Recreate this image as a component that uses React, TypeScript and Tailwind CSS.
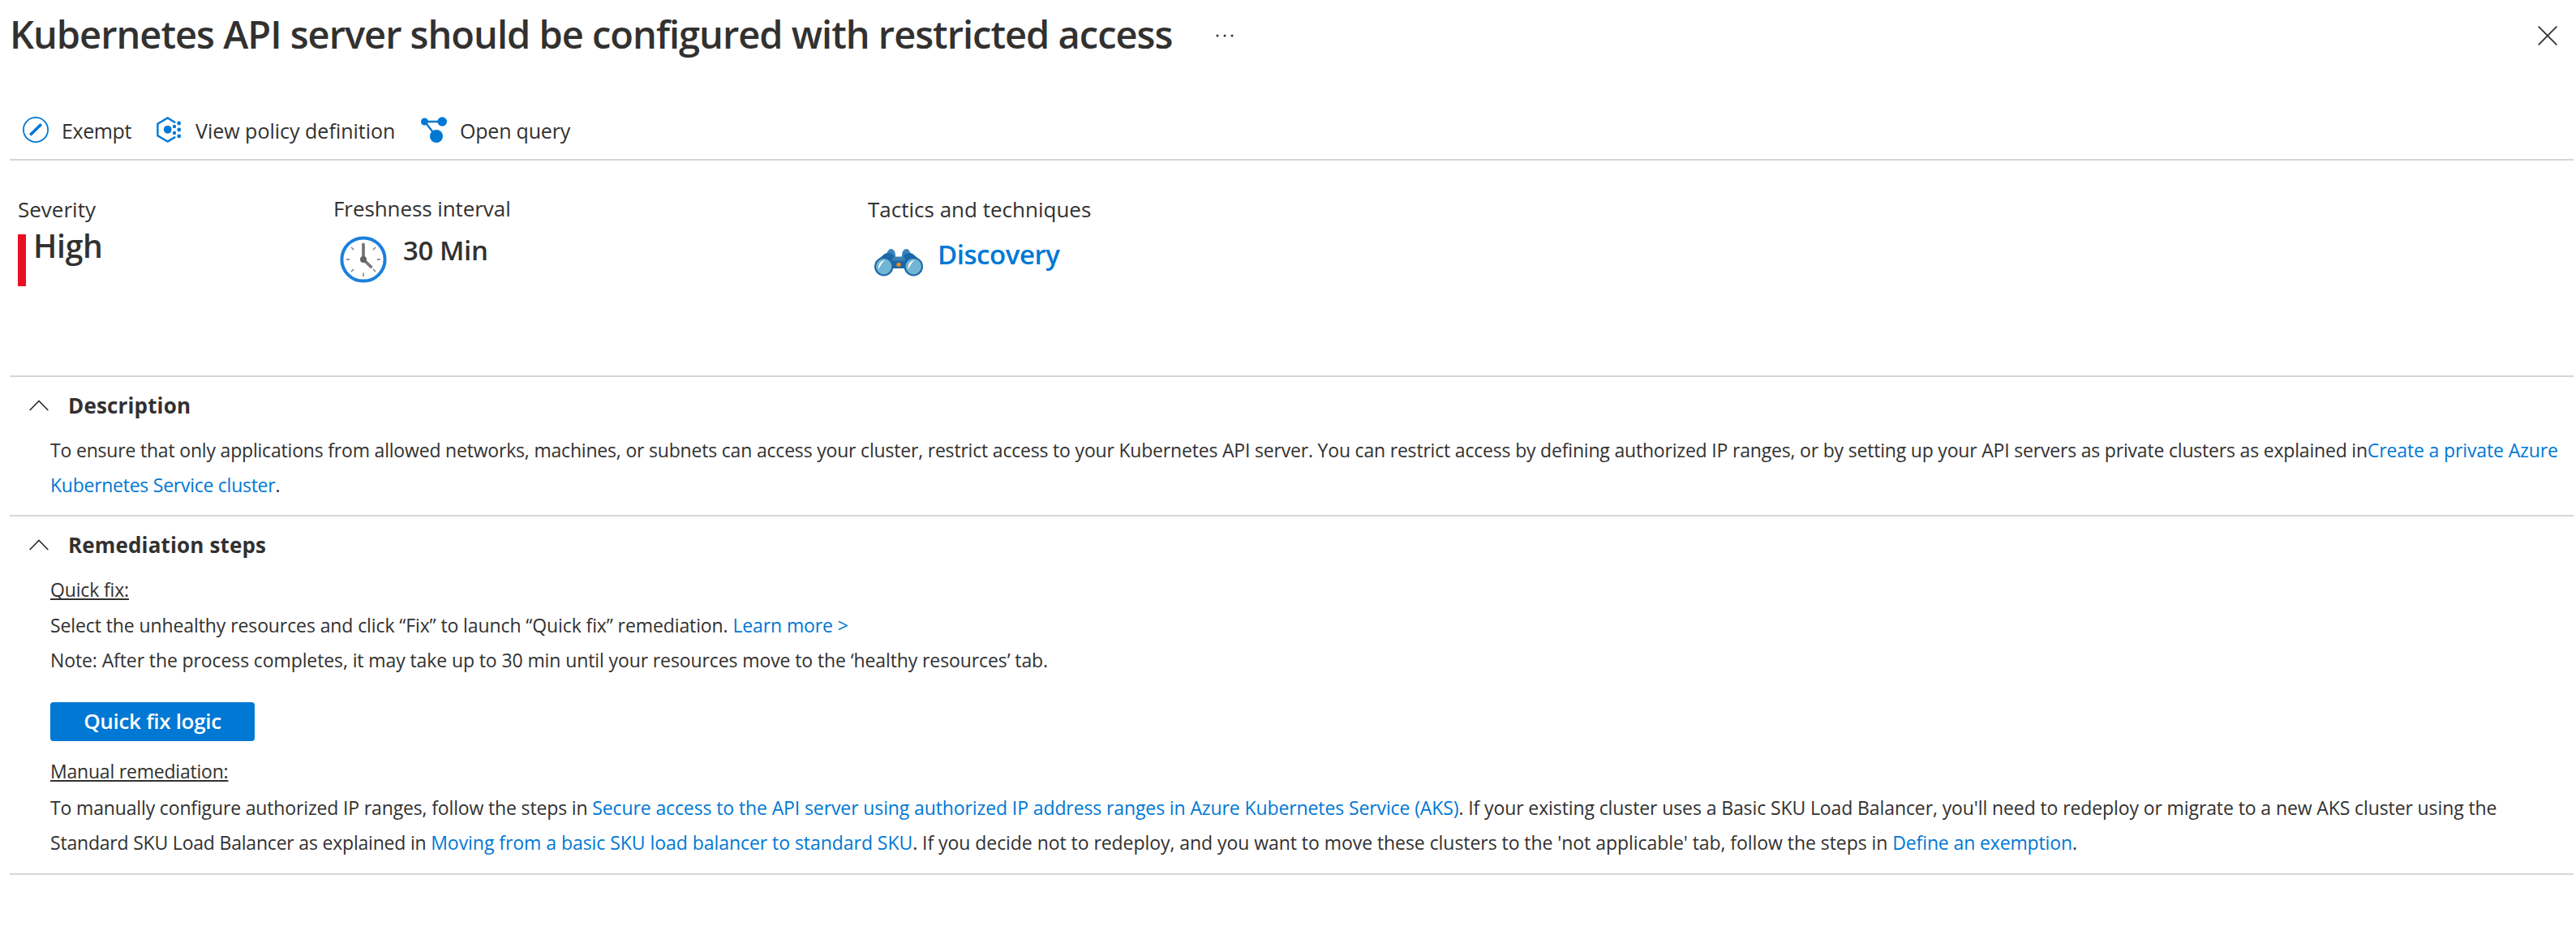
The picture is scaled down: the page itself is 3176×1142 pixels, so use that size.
import type { ReactNode } from "react";

function ExemptIcon() {
  return (
    <svg width="32" height="32" viewBox="0 0 32 32" fill="none" stroke="#0078d4">
      <circle cx="16" cy="16" r="15.1" strokeWidth="1.8" />
      <path d="M9.2 22.5 22.8 9.2" strokeWidth="3.6" />
    </svg>
  );
}

function PolicyIcon() {
  return (
    <svg width="32" height="32" viewBox="0 0 32 32" fill="#0078d4">
      <path d="M24.2 7.2 14.7 1.5 2.4 8.6V23.4L14.7 30.5 24.2 24.9" fill="none" stroke="#0078d4" strokeWidth="2.4" />
      <circle cx="14.7" cy="15.8" r="4.9" />
      <circle cx="28.7" cy="8" r="2.4" />
      <circle cx="23" cy="12" r="2.2" />
      <circle cx="28.7" cy="16" r="2.4" />
      <circle cx="23" cy="20" r="2.2" />
      <circle cx="28.7" cy="23.9" r="2.4" />
    </svg>
  );
}

function QueryIcon() {
  return (
    <svg width="32" height="32" viewBox="0 0 32 32" fill="#0078d4">
      <path d="M26 6H4.6L18 23" fill="none" stroke="#0078d4" strokeWidth="2.4" />
      <circle cx="4.5" cy="6" r="4.5" />
      <circle cx="26.2" cy="6" r="5.8" />
      <circle cx="19" cy="24" r="8" />
    </svg>
  );
}

function ClockIcon() {
  return (
    <svg width="58" height="58" viewBox="-29 -29 58 58" fill="none">
      <circle r="26.6" fill="#fff" stroke="#1a80de" strokeWidth="4" />
      <path
        d="M-21 0H-16.8M16.8 0H21M0 16.6V21M-15 -15 -12 -12M15 -15 12 -12M-15 15 -12 12M15 15 12 12"
        stroke="#767676"
        strokeWidth="1.4"
      />
      <path d="M0 -18.5V0L9.3 9" stroke="#767676" strokeWidth="3.8" strokeLinecap="round" />
      <circle r="4" fill="#626262" />
    </svg>
  );
}

function BinocularsIcon() {
  return (
    <svg width="60" height="34" viewBox="0 0 60 34">
      <path d="M15 7C16.5 1.5 18.5 0 20.5 0 23.5 0 26 3 26 8V11H15ZM45 7C43.5 1.5 41.5 0 39.5 0 36.5 0 34 3 34 8V11H45Z" fill="#3a84bd" />
      <path d="M1.5 16 11.5 7C15 4 21 4.500 23.500 8L26 11.500 22 24H12ZM58.500 16 48.500 7C45 4 39 4.500 36.500 8L34 11.500 38 24H48Z" fill="#1b67a8" />
      <path d="M21 10H39V24H21Z" fill="#1b67a8" />
      <path d="M23.500 9.500H36.500L38.500 14.500H21.500Z" fill="#3a80b5" />
      <circle cx="11.700" cy="21.700" r="11.700" fill="#1b67a8" />
      <circle cx="48.300" cy="21.700" r="11.700" fill="#1b67a8" />
      <circle cx="11.700" cy="21.700" r="9.700" fill="#70b5d2" />
      <circle cx="48.300" cy="21.700" r="9.700" fill="#70b5d2" />
      <path d="M5.200 25C4.300 19 8 14 13.500 14 9.500 16 8 20 5.200 25ZM41.800 25C40.900 19 44.600 14 50.100 14 46.100 16 44.600 20 41.800 25Z" fill="#fff" />
      <circle cx="30" cy="19.300" r="2.600" fill="#ff8c00" />
    </svg>
  );
}

function Chevron() {
  return (
    <svg width="24" height="14" viewBox="0 0 24 14" fill="none" stroke="#323130" strokeWidth="1.7">
      <path d="M.7 13 12 1.500 23.300 13" />
    </svg>
  );
}

function A({ className, children }: { className: string; children: ReactNode }) {
  return (
    <a href="#" className={`text-[#0078d4] ${className}`}>
      {children}
    </a>
  );
}

function SectionHeading({ children }: { children: ReactNode }) {
  return (
    <button className="flex h-[69px] items-center pl-6">
      <Chevron />
      <span className="ml-6 pt-0.5 text-[26px] font-bold tracking-[0.150px]">{children}</span>
    </button>
  );
}

export default function App() {
  return (
    <div className="flex h-[1142px] flex-col overflow-hidden bg-white pl-3 pr-[3px] font-['Open_Sans','Noto_Sans',sans-serif] whitespace-nowrap text-[#323130]">
      <header className="flex h-[84px] items-center pt-1">
        <h1 className="-mt-1 w-[1487px] text-[47px] leading-[80px] font-semibold tracking-[-1px]">
          Kubernetes API server should be configured with restricted access
        </h1>
        <svg width="22" height="4" viewBox="0 0 22 4" fill="#323130">
          <circle cx="2" cy="2" r="1.500" />
          <circle cx="11" cy="2" r="1.500" />
          <circle cx="20" cy="2" r="1.500" />
        </svg>
        <svg className="mr-5 ml-auto" width="24" height="24" viewBox="0 0 24 24" stroke="#323130" strokeWidth="1.800">
          <path d="M.7 .7 23.300 23.300M23.300 .7 .7 23.300" />
        </svg>
      </header>

      <nav className="mt-10 flex h-[74px] items-center border-b-2 border-[#d6d6d6] pl-4 text-[25px]">
        <button className="flex w-[164px] items-center gap-4">
          <ExemptIcon />
          <span className="pt-[3px] tracking-[-0.400px]">Exempt</span>
        </button>
        <button className="flex w-[327px] items-center gap-[17px]">
          <PolicyIcon />
          <span className="pt-[3px]">View policy definition</span>
        </button>
        <button className="flex items-center gap-4">
          <QueryIcon />
          <span className="pt-[3px] tracking-[-0.200px]">Open query</span>
        </button>
      </nav>

      <section className="flex h-[265px] pt-[42px] pl-2.5">
        <div className="w-[388px]">
          <div className="text-[26px] leading-[36px]">Severity</div>
          <div className="mt-[13px] h-16 border-l-[10px] border-[#e81123] pl-[9px] text-[39px] leading-[27px] font-semibold tracking-[-0.250px]">
            High
          </div>
        </div>
        <div className="w-[660px]">
          <div className="-mt-px pl-px text-[26px] leading-[36px] tracking-[-0.080px]">Freshness interval</div>
          <div className="mt-4 flex items-start pl-[9px]">
            <ClockIcon />
            <span className="ml-5 text-[33px] leading-[36px] font-semibold tracking-[-0.400px]">30 Min</span>
          </div>
        </div>
        <div>
          <div className="text-[26px] leading-[36px]">Tactics and techniques</div>
          <div className="mt-5 flex items-start pl-2">
            <span className="mt-[11px]">
              <BinocularsIcon />
            </span>
            <A className="ml-[18px] text-[33px] leading-[36px] font-semibold tracking-[-0.450px]">Discovery</A>
          </div>
        </div>
      </section>

      <section className="h-[172px] border-t-2 border-[#d6d6d6]">
        <SectionHeading>Description</SectionHeading>
        <p className="pl-[50px] text-[23px] leading-[43px]">
          <span className="tracking-[-0.191px]">
            To ensure that only applications from allowed networks, machines, or subnets can access your cluster, restrict access to your
            Kubernetes API server. You can restrict access by defining authorized IP ranges, or by setting up your API servers as private
            clusters as explained in
          </span>
          <A className="tracking-[-0.130px]">Create a private Azure</A>
          <br />
          <A className="tracking-[-0.260px]">Kubernetes Service cluster</A>.
        </p>
      </section>

      <section className="h-[444px] border-y-2 border-[#d6d6d6]">
        <SectionHeading>Remediation steps</SectionHeading>
        <div className="pl-[50px] text-[23px] leading-[43px]">
          <div className="h-11 tracking-[-0.152px] underline decoration-2 underline-offset-2 [text-decoration-skip-ink:none]">Quick fix:</div>
          <p>
            <span className="tracking-[-0.100px]">
              Select the unhealthy resources and click “Fix” to launch “Quick fix” remediation.{" "}
            </span>
            <A className="tracking-[-0.120px]">Learn more &gt;</A>
            <br />
            <span className="tracking-[-0.105px]">
              Note: After the process completes, it may take up to 30 min until your resources move to the ‘healthy resources’ tab.
            </span>
          </p>
          <button className="mt-[30px] flex h-12 w-[252px] items-center justify-center rounded bg-[#0078d4] pb-0.5 text-[26px] leading-[44px] font-semibold tracking-[-0.300px] text-white">
            Quick fix logic
          </button>
          <div className="mt-4 h-[45px] tracking-[-0.210px] underline decoration-2 underline-offset-2 [text-decoration-skip-ink:none]">
            Manual remediation:
          </div>
          <p>
            <span className="tracking-[-0.150px]">To manually configure authorized IP ranges, follow the steps in </span>
            <A className="tracking-[-0.110px]">
              Secure access to the API server using authorized IP address ranges in Azure Kubernetes Service (AKS)
            </A>
            <span className="tracking-[-0.105px]">
              . If your existing cluster uses a Basic SKU Load Balancer, you'll need to redeploy or migrate to a new AKS cluster using the
            </span>
            <br />
            <span className="tracking-[-0.200px]">Standard SKU Load Balancer as explained in </span>
            <A className="tracking-[-0.050px]">Moving from a basic SKU load balancer to standard SKU</A>
            <span className="tracking-[-0.055px]">
              . If you decide not to redeploy, and you want to move these clusters to the 'not applicable' tab, follow the steps in{" "}
            </span>
            <A className="tracking-[-0.130px]">Define an exemption</A>.
          </p>
        </div>
      </section>
    </div>
  );
}
